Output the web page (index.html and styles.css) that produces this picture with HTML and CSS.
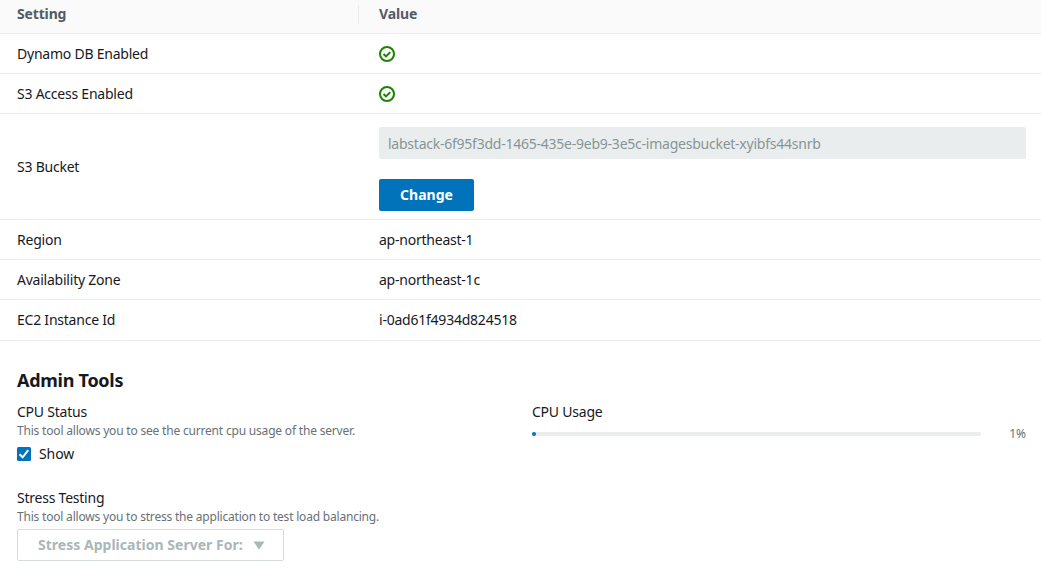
FILE: index.html
```html
<!DOCTYPE html>
<html lang="en">
<head>
<meta charset="utf-8">
<title>Settings</title>
<link rel="stylesheet" href="styles.css">
</head>
<body>
<div class="table">
  <div class="row head"><div class="cell">Setting</div><div class="cell value">Value</div></div>
  <div class="row"><div class="cell">Dynamo DB Enabled</div><div class="cell value"><svg class="check" viewBox="0 0 16 16"><circle cx="8" cy="8" r="7"/><path d="M4.5 8l2.5 2.4 4.3-4.3"/></svg></div></div>
  <div class="row"><div class="cell">S3 Access Enabled</div><div class="cell value"><svg class="check" viewBox="0 0 16 16"><circle cx="8" cy="8" r="7"/><path d="M4.5 8l2.5 2.4 4.3-4.3"/></svg></div></div>
  <div class="row bucket"><div class="cell">S3 Bucket</div><div class="cell value"><div class="field">labstack-6f95f3dd-1465-435e-9eb9-3e5c-imagesbucket-xyibfs44snrb</div><button class="primary">Change</button></div></div>
  <div class="row"><div class="cell">Region</div><div class="cell value">ap-northeast-1</div></div>
  <div class="row"><div class="cell">Availability Zone</div><div class="cell value">ap-northeast-1c</div></div>
  <div class="row last"><div class="cell">EC2 Instance Id</div><div class="cell value">i-0ad61f4934d824518</div></div>
</div>
<main class="tools">
  <h2 class="title">Admin Tools</h2>
  <div class="columns">
    <section>
      <div class="label">CPU Status</div>
      <div class="hint">This tool allows you to see the current cpu usage of the server.</div>
      <label class="option"><svg class="box" viewBox="0 0 14 14"><rect width="14" height="14" rx="1.5"/><path d="M2.5 7.3l3.2 3L11.2 3.2"/></svg><span class="show">Show</span></label>
    </section>
    <section>
      <div class="label">CPU Usage</div>
      <div class="progress"><div class="track"><div class="bar"></div></div><span class="percent">1%</span></div>
    </section>
  </div>
  <section class="stress">
    <div class="label">Stress Testing</div>
    <div class="hint">This tool allows you to stress the application to test load balancing.</div>
    <button class="dropdown"><span>Stress Application Server For:</span><svg class="caret" viewBox="0 0 12 9"><path d="M0.5 0.5h11L6 8.5z"/></svg></button>
  </section>
</main>
</body>
</html>
```
FILE: styles.css
```css
* { box-sizing: border-box; }
body { margin: 0; background: #fff; color: #16191f; font: 14px/22px "Noto Sans", sans-serif; letter-spacing: -0.23px; overflow: hidden; }
.row { display: grid; grid-template-columns: 359px 1fr; height: 40px; border-bottom: 1px solid #eaeded; align-items: center; }
.cell { padding-left: 17px; }
.value { padding: 0 15px 0 20px; }
.head { grid-template-columns: 358px 1fr; height: 34px; padding-top: 5px; align-items: start; background: #fafafa; color: #545b64; font-weight: 700; line-height: 17px; letter-spacing: -0.15px; }
.head .value { height: 19px; border-left: 1px solid #eaeded; }
.bucket { height: 106px; }
.last { height: 41px; }
.check { display: block; width: 16px; height: 16px; fill: none; stroke: #1d8102; stroke-width: 2; }
.field { height: 32px; margin-top: 5px; padding: 6px 9px 4px; border-radius: 2px; background: #eaeded; color: #879596; letter-spacing: -0.24px; }
button { display: flex; align-items: center; height: 32px; font: 700 14px/22px "Noto Sans", sans-serif; border-radius: 2px; white-space: nowrap; }
.primary { margin-top: 20px; width: 95px; justify-content: center; padding: 0; border: 0; background: #0073bb; color: #fff; }
.tools { padding: 27px 15px 0 17px; }
.title { margin: 0; font-size: 18px; line-height: 24px; font-weight: 700; letter-spacing: -0.27px; }
.columns { display: grid; grid-template-columns: 515px 1fr; margin-top: 9px; }
.hint { color: #687078; font-size: 12px; line-height: 16px; letter-spacing: -0.19px; }
.stress .hint { letter-spacing: -0.2px; }
.option { display: flex; align-items: center; gap: 8px; margin-top: 4px; }
.show { letter-spacing: -0.1px; }
.box { width: 14px; height: 14px; fill: #0073bb; }
.box path { fill: none; stroke: #fff; stroke-width: 2; }
.progress { display: flex; align-items: center; }
.track { width: 449px; height: 4px; border-radius: 2px; background: #eaeded; }
.bar { width: 4px; height: 4px; border-radius: 2px; background: #0073bb; }
.percent { margin-left: auto; font-size: 12px; color: #687078; letter-spacing: 0; }
.stress { margin-top: 22px; }
.dropdown { margin-top: 4px; width: 267px; padding: 0 18px 0 20px; justify-content: space-between; border: 1px solid #d5dbdb; background: #fff; color: #aab7b8; letter-spacing: 0.02px; }
.caret { flex: none; width: 12px; height: 9px; fill: #aab7b8; }
```
